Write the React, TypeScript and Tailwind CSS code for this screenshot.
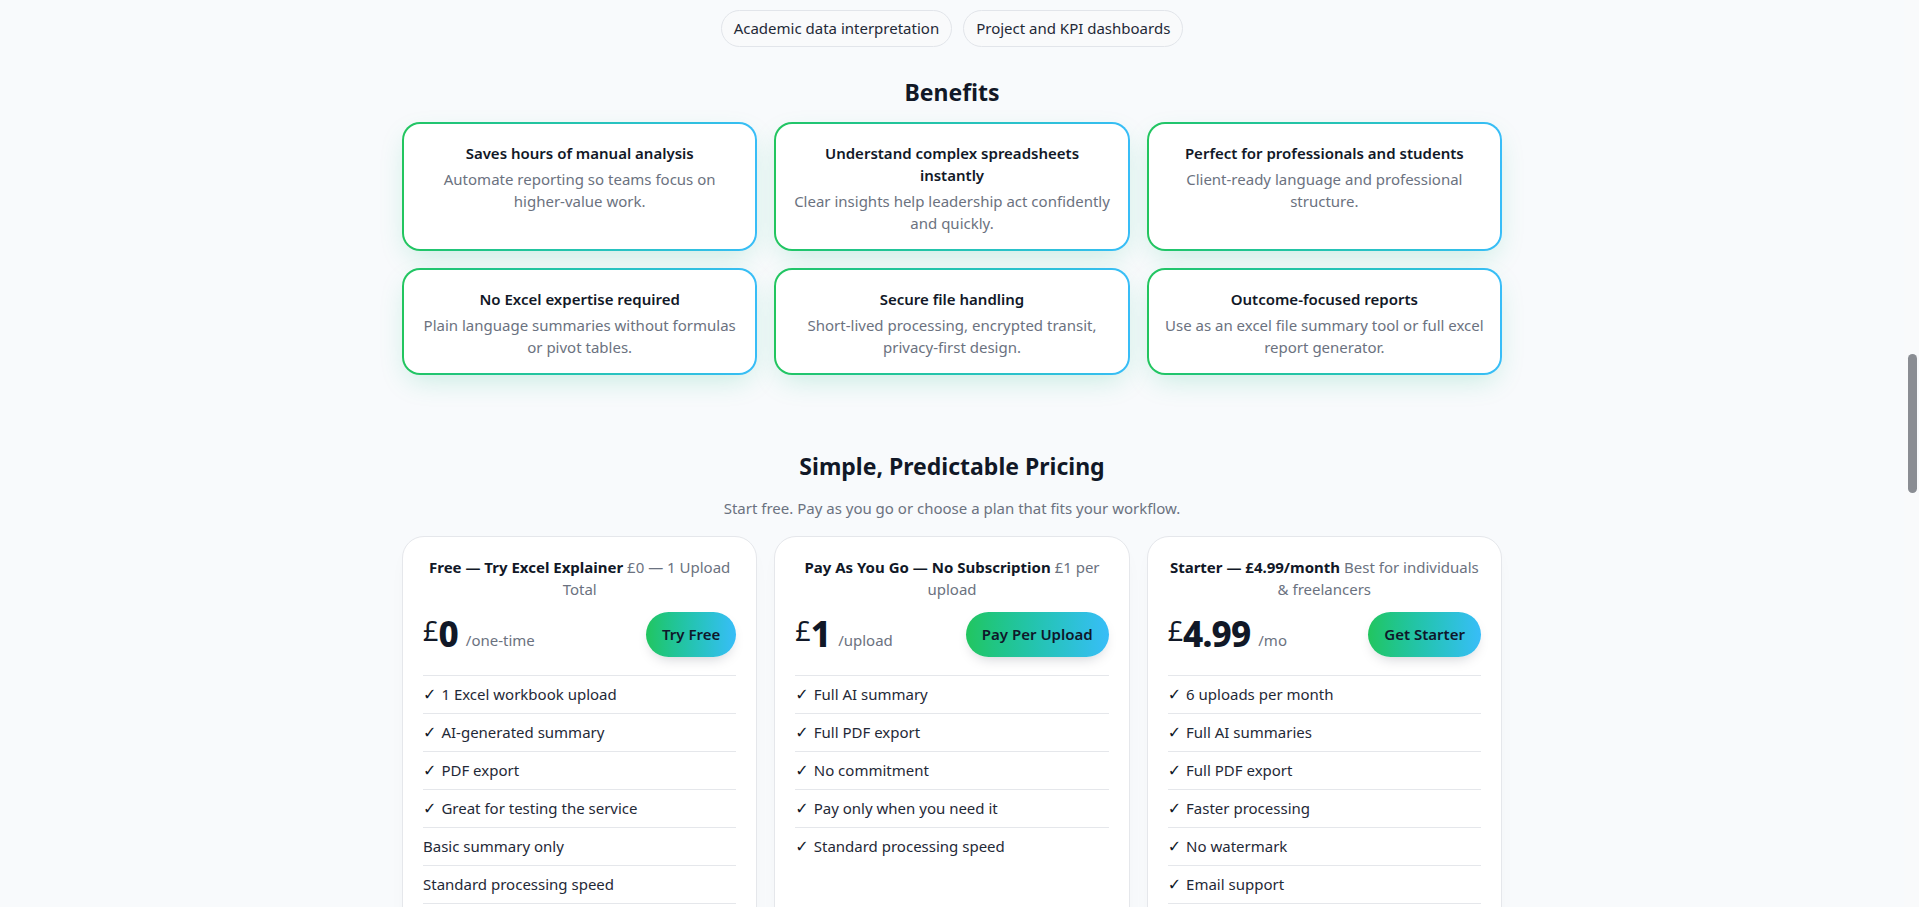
import React from "react";

const pills = ["Academic data interpretation", "Project and KPI dashboards"];

const benefits = [
  {
    title: "Saves hours of manual analysis",
    text: "Automate reporting so teams focus on higher-value work.",
  },
  {
    title: "Understand complex spreadsheets instantly",
    text: "Clear insights help leadership act confidently and quickly.",
  },
  {
    title: "Perfect for professionals and students",
    text: "Client-ready language and professional structure.",
  },
  {
    title: "No Excel expertise required",
    text: "Plain language summaries without formulas or pivot tables.",
  },
  {
    title: "Secure file handling",
    text: "Short-lived processing, encrypted transit, privacy-first design.",
  },
  {
    title: "Outcome-focused reports",
    text: "Use as an excel file summary tool or full excel report generator.",
  },
];

type Plan = {
  name: string;
  note: string;
  price: string;
  unit: string;
  cta: string;
  features: { label: string; check: boolean }[];
};

const plans: Plan[] = [
  {
    name: "Free — Try Excel Explainer",
    note: "£0 — 1 Upload Total",
    price: "0",
    unit: "/one-time",
    cta: "Try Free",
    features: [
      { label: "1 Excel workbook upload", check: true },
      { label: "AI-generated summary", check: true },
      { label: "PDF export", check: true },
      { label: "Great for testing the service", check: true },
      { label: "Basic summary only", check: false },
      { label: "Standard processing speed", check: false },
      { label: "Watermarked report", check: false },
    ],
  },
  {
    name: "Pay As You Go — No Subscription",
    note: "£1 per upload",
    price: "1",
    unit: "/upload",
    cta: "Pay Per Upload",
    features: [
      { label: "Full AI summary", check: true },
      { label: "Full PDF export", check: true },
      { label: "No commitment", check: true },
      { label: "Pay only when you need it", check: true },
      { label: "Standard processing speed", check: true },
    ],
  },
  {
    name: "Starter — £4.99/month",
    note: "Best for individuals & freelancers",
    price: "4.99",
    unit: "/mo",
    cta: "Get Starter",
    features: [
      { label: "6 uploads per month", check: true },
      { label: "Full AI summaries", check: true },
      { label: "Full PDF export", check: true },
      { label: "Faster processing", check: true },
      { label: "No watermark", check: true },
      { label: "Email support", check: true },
      { label: "Cancel anytime", check: true },
    ],
  },
];

const BenefitCard = ({ title, text }: { title: string; text: string }) => (
  <div className="rounded-[18px] bg-gradient-to-r from-[#22c55e] to-[#38bdf8] p-[2px] shadow-[0_10px_28px_-6px_rgba(16,185,129,0.22)]">
    <div className="h-full rounded-[16px] bg-white px-[14px] pt-[18px] pb-[15px] text-center">
      <h3 className="px-[6px] text-[15px] leading-[22px] font-semibold text-[#111827]">
        {title}
      </h3>
      <p className="mt-[5px] px-[2px] text-[15px] leading-[21.6px] text-[#6b7280]">
        {text}
      </p>
    </div>
  </div>
);

const PlanCard = ({ plan }: { plan: Plan }) => (
  <div className="rounded-[22px] border border-[#e5e7eb] bg-white px-5 pt-5 shadow-[0_8px_24px_-12px_rgba(15,23,42,0.08)]">
    <div className="text-center text-[15px] leading-[21.6px] text-[#6b7280]">
      <span className="font-bold text-[#111827]">{plan.name}</span> {plan.note}
    </div>
    <div className="mt-[11px] flex items-center justify-between">
      <div className="flex items-end">
        <span className="mb-[10px] text-[27px] leading-none text-[#111827]">
          £
        </span>
        <span className="text-[35px] leading-[40px] font-extrabold tracking-tight text-[#111827]">
          {plan.price}
        </span>
        <span className="mb-[3px] ml-[8px] text-[15px] leading-[21px] text-[#6b7280]">
          {plan.unit}
        </span>
      </div>
      <button className="rounded-full bg-gradient-to-r from-[#22c55e] to-[#38bdf8] px-4 py-3 text-[15px] leading-[21px] font-semibold text-[#0f172a] shadow-[0_6px_14px_-6px_rgba(15,23,42,0.25)]">
        {plan.cta}
      </button>
    </div>
    <ul className="mt-[18px]">
      {plan.features.map((f) => (
        <li
          key={f.label}
          className="border-t border-[#e5e7eb] py-2 text-[15px] leading-[21px] text-[#1f2937]"
        >
          {f.check && (
            <span className="mr-[5px] font-['DejaVu_Sans',sans-serif] text-[16px] font-bold text-[#111827]">
              ✓
            </span>
          )}
          {f.label}
        </li>
      ))}
    </ul>
  </div>
);

const App = () => {
  return (
    <div className="flex h-screen overflow-hidden bg-[#f8fafc] font-['Noto_Sans',sans-serif]">
      <main className="flex-1 overflow-hidden pt-[10px]">
        <div className="flex justify-center gap-[11px]">
          {pills.map((p) => (
            <span
              key={p}
              className="rounded-full border border-[#e2e5ea] bg-[#f9fafb] px-3 py-[7px] text-[15px] leading-[21px] text-[#1f2937]"
            >
              {p}
            </span>
          ))}
        </div>

        <h2 className="mt-[29px] text-center text-[23px] leading-[32px] font-bold text-[#111827]">
          Benefits
        </h2>
        <div className="mx-auto mt-[14px] grid max-w-[1100px] grid-cols-3 gap-[17px]">
          {benefits.map((b) => (
            <BenefitCard key={b.title} title={b.title} text={b.text} />
          ))}
        </div>

        <h2 className="mt-[75px] text-center text-[23px] leading-[32px] font-bold text-[#111827]">
          Simple, Predictable Pricing
        </h2>
        <p className="mt-[15px] text-center text-[15px] leading-[22px] text-[#6b7280]">
          Start free. Pay as you go or choose a plan that fits your workflow.
        </p>
        <div className="mx-auto mt-[17px] grid max-w-[1100px] grid-cols-3 gap-[17px]">
          {plans.map((p) => (
            <PlanCard key={p.name} plan={p} />
          ))}
        </div>
      </main>
      <div className="w-[15px] shrink-0 bg-[#f9fafb] pt-[354px] pl-[4px]">
        <div className="h-[139px] w-[9px] rounded-full bg-[#8a8d93]" />
      </div>
    </div>
  );
};

export default App;
